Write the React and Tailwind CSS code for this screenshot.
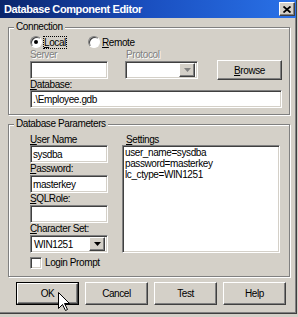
import React from "react";

const sunken =
  "border border-t-[#808080] border-l-[#808080] border-r-white border-b-white shadow-[inset_1px_1px_0_#404040,inset_-1px_-1px_0_#d4d0c8]";
const raised =
  "border border-t-white border-l-white border-r-[#404040] border-b-[#404040] shadow-[inset_-1px_-1px_0_#808080]";
const etched =
  "relative border border-[#808080] shadow-[1px_1px_0_#fff,inset_1px_1px_0_#fff]";

function Acc({ k, rest }) {
  return (
    <span>
      <span className="underline underline-offset-1">{k}</span>
      {rest}
    </span>
  );
}

function Edit({ value, className = "" }) {
  return (
    <div className={`${sunken} h-[18px] bg-white flex items-center pl-[2px] leading-[11px] ${className}`}>
      {value}
    </div>
  );
}

function Combo({ value, disabled, className = "" }) {
  return (
    <div className={`${sunken} h-[18px] bg-white flex items-center justify-between p-[2px] leading-[11px] ${className}`}>
      <span className="pl-[1px]">{value}</span>
      <div className={`${raised} w-[16px] h-[14px] bg-[#d4d0c8] flex items-center justify-center`}>
        <svg width="7" height="4" viewBox="0 0 7 4">
          <path d="M0 0h7L3.5 4z" fill={disabled ? "#808080" : "#000"} />
        </svg>
      </div>
    </div>
  );
}

function Radio({ checked }) {
  return (
    <div className="w-[12px] h-[12px] rounded-full bg-white border border-t-[#808080] border-l-[#808080] border-r-white border-b-white shadow-[inset_1px_1px_0_#404040] flex items-center justify-center">
      {checked && <div className="w-[4px] h-[4px] rounded-full bg-black" />}
    </div>
  );
}

function Button({ children, isDefault, className = "" }) {
  const inner = (
    <div className={`${raised} h-full w-full bg-[#d4d0c8] flex items-center justify-center leading-[11px]`}>
      {children}
    </div>
  );
  if (isDefault) {
    return <div className={`border border-black ${className}`}>{inner}</div>;
  }
  return <div className={className}>{inner}</div>;
}

export default function App() {
  return (
    <div className="relative w-[298px] h-[317px] overflow-hidden bg-[#d4d0c8] text-black text-[10px] tracking-[-0.4px] font-['Liberation_Sans',Arial,sans-serif]">
      <div className="flex flex-col w-[297px] h-[314px] border-r border-b border-r-[#404040] border-b-[#404040] shadow-[inset_-1px_-1px_0_#808080]">
        {/* title bar */}
        <div className="h-[18px] flex items-center justify-between pl-[4px] pr-[1px] bg-linear-to-r from-[#0a246a] via-[#1a4fc0] to-[#2a72e8]">
          <span className="text-white font-bold text-[11px] tracking-[-0.4px] leading-[13px]">
            Database Component Editor
          </span>
          <div className={`${raised} w-[16px] h-[14px] bg-[#d4d0c8] flex items-center justify-center`}>
            <svg width="8" height="7" viewBox="0 0 8 7">
              <path d="M0.5 0.5L7.5 6.5M7.5 0.5L0.5 6.5" stroke="#000" strokeWidth="1.8" />
            </svg>
          </div>
        </div>

        <div className="flex flex-col pt-[9px] pl-[8px]">
          {/* Connection */}
          <div className={`${etched} w-[282px] h-[88px] pl-[21px] pt-[7px]`}>
            <span className="absolute -top-[7px] left-[5px] px-[2px] bg-[#d4d0c8] leading-[11px]">Connection</span>
            <div className="h-[14px] flex items-center">
              <div className="w-[58px] flex items-center gap-[1px]">
                <Radio checked />
                <span className="border border-dotted border-black leading-[11px]">
                  <Acc k="L" rest="ocal" />
                </span>
              </div>
              <div className="flex items-center gap-[2px]">
                <Radio />
                <span className="leading-[11px]">
                  <Acc k="R" rest="emote" />
                </span>
              </div>
            </div>
            <div className="h-[12px] flex items-center leading-[12px] text-[#808080] [text-shadow:1px_1px_0_#fff]">
              <span className="w-[96px]">Server</span>
              <span>Protocol</span>
            </div>
            <div className="h-[18px] flex items-center">
              <Edit value="" className="w-[78px]" />
              <Combo value="" disabled className="w-[73px] ml-[17px]" />
              <Button className="w-[65px] h-[20px] ml-[19px]">
                <Acc k="B" rest="rowse" />
              </Button>
            </div>
            <div className="h-[11px] flex items-center leading-[11px]">
              <Acc k="D" rest="atabase:" />
            </div>
            <Edit value=".\Employee.gdb" className="w-[252px]" />
          </div>

          {/* Database Parameters */}
          <div className={`${etched} w-[282px] h-[153px] mt-[9px] pl-[21px] pt-[9px] flex`}>
            <span className="absolute -top-[7px] left-[5px] px-[2px] bg-[#d4d0c8] leading-[11px]">Database Parameters</span>
            <div className="w-[92px] flex flex-col">
              <div className="h-[11px] leading-[11px]">
                <Acc k="U" rest="ser Name" />
              </div>
              <Edit value="sysdba" className="w-[78px]" />
              <div className="h-[12px] leading-[12px]">
                <Acc k="P" rest="assword:" />
              </div>
              <Edit value="masterkey" className="w-[78px]" />
              <div className="h-[12px] leading-[12px]">
                <Acc k="S" rest="QLRole:" />
              </div>
              <Edit value="" className="w-[78px]" />
              <div className="h-[12px] leading-[12px]">
                <Acc k="C" rest="haracter Set:" />
              </div>
              <Combo value="WIN1251" className="w-[78px]" />
              <div className="h-[13px] mt-[3px] flex items-center gap-[3px]">
                <div className={`${sunken} w-[12px] h-[12px] bg-white`} />
                <span className="leading-[11px]">Login Prompt</span>
              </div>
            </div>
            <div className="flex flex-col">
              <div className="h-[11px] leading-[11px] pl-[4px]">
                <Acc k="S" rest="ettings" />
              </div>
              <div className={`${sunken} w-[158px] h-[108px] bg-white pl-[2px] pt-[1px] leading-[11px]`}>
                <div>user_name=sysdba</div>
                <div>password=masterkey</div>
                <div>lc_ctype=WIN1251</div>
              </div>
            </div>
          </div>

          {/* buttons */}
          <div className="flex gap-[6px] mt-[5px] ml-[8px] h-[23px]">
            <Button isDefault className="w-[63px] h-full">OK</Button>
            <Button className="w-[63px] h-full">Cancel</Button>
            <Button className="w-[63px] h-full">Test</Button>
            <Button className="w-[63px] h-full">Help</Button>
          </div>
        </div>
      </div>

      {/* mouse cursor */}
      <svg className="absolute left-[58px] top-[292px]" width="13" height="20" viewBox="0 0 13 20">
        <path
          d="M0.5 0.5L0.5 16.5L4.5 12.5L7.5 18.5L9.5 17.5L6.5 11.5L11.5 11.5Z"
          fill="#fff"
          stroke="#000"
          strokeWidth="1"
        />
      </svg>
    </div>
  );
}
